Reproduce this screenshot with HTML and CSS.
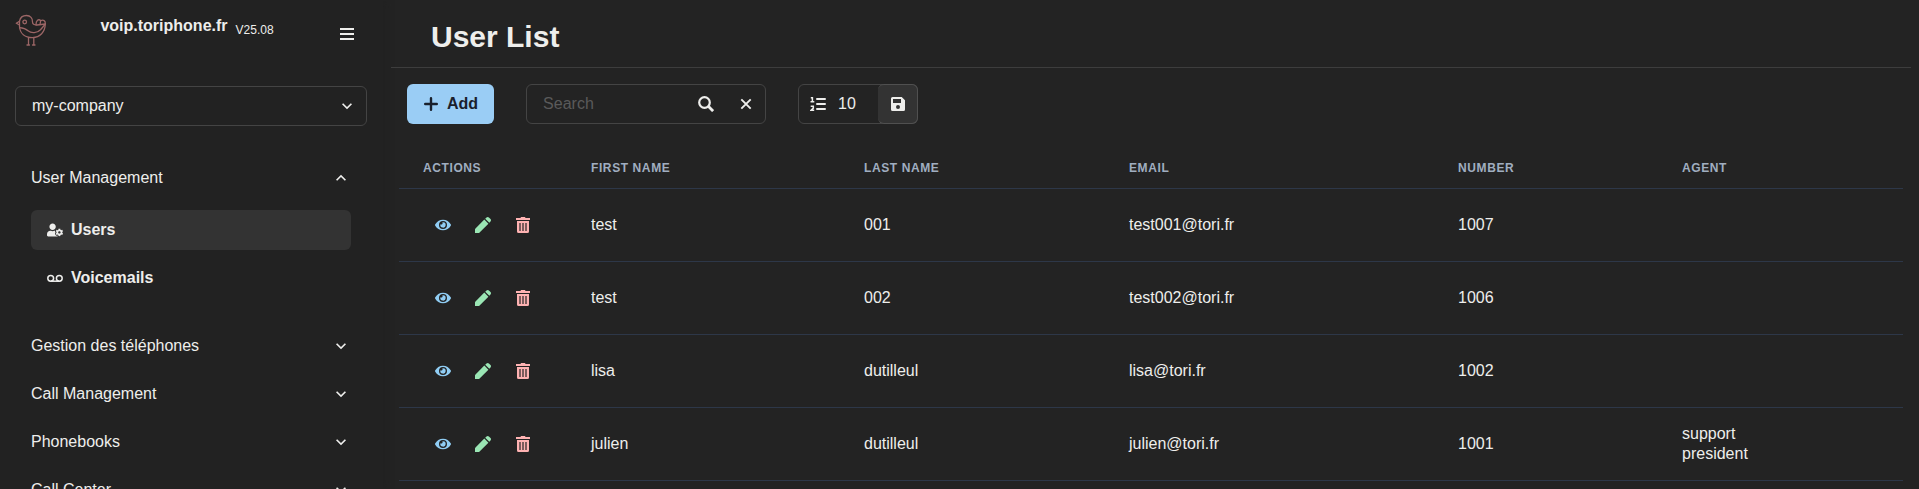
FILE: index.html
```html
<!DOCTYPE html>
<html lang="en">
<head>
<meta charset="utf-8">
<meta name="viewport" content="width=device-width, initial-scale=1">
<title>User List</title>
<link rel="stylesheet" href="styles.css">
</head>
<body>
<svg class="sprite" aria-hidden="true">
  <symbol id="chevron" viewBox="0 0 24 24"><path fill="currentColor" d="M16.590 8.590 12 13.170 7.410 8.590 6 10l6 6 6-6z"/></symbol>
  <symbol id="eye" viewBox="0 0 576 512"><path fill="currentColor" d="M572.52 241.4C518.29 135.59 410.93 64 288 64S57.68 135.64 3.48 241.41a32.35 32.35 0 0 0 0 29.19C57.71 376.41 165.07 448 288 448s230.32-71.64 284.52-177.41a32.35 32.35 0 0 0 0-29.19zM288 400a144 144 0 1 1 144-144 143.93 143.93 0 0 1-144 144zm0-240a95.31 95.31 0 0 0-25.31 3.79 47.85 47.85 0 0 1-66.9 66.9A95.78 95.78 0 1 0 288 160z"/></symbol>
  <symbol id="pencil" viewBox="0 0 16 16"><path fill="currentColor" d="M9.300 2.600 13.400 6.700 4.600 15.500Q4.100 16 3.500 16H0V12.500Q0 11.900.500 11.400zM10.200 1.700 11.500.500Q12.700-.500 13.900.500L15.500 2.100Q16.500 3.300 15.500 4.500L14.300 5.800z"/></symbol>
  <symbol id="trash" viewBox="0 0 16 16"><path fill="currentColor" d="M1 1h4.500L6 0h4l.500 1H15v2H1z"/><path fill="currentColor" fill-rule="evenodd" d="M2 4h12v10.500q0 1.500-1.500 1.500h-9Q2 16 2 14.500zm2 2v8h2V6zm3 0v8h2V6zm3 0v8h2V6z"/><path fill="currentColor" opacity=".4" d="M4 6h2v8H4zM7 6h2v8H7zM10 6h2v8h-2z"/></symbol>
</svg>
<div class="layout">
  <aside class="sidebar">
    <header class="brand">
      <svg class="logo" viewBox="0 0 32 32" fill="none" stroke="currentColor" stroke-width="1.300" stroke-linecap="round" stroke-linejoin="round" aria-hidden="true">
        <path d="M4.500 7.200C5.300 3 8 1.500 11.500 1.500c4 0 6.200 3 6 6.500 0 2 1.500 3.200 4.500 3L30.300 10C30 18 25 23.600 17.500 23.600S5 19.500 4.500 12.500z"/>
        <path d="M4.500 7.200 1.300 9.300 4.500 11M4.500 13.700c4 .300 6 .800 8.500 3 3.500 3 9 2.500 12.500-1 2-2.200 3.500-4 4.800-5.700M21 10.800c0-4.500 2.500-6 4.700-4.300L25 10.500M25.700 6.800c2.500-1.500 5 0 4.600 3.200"/>
        <circle cx="9.700" cy="8" r="1.800"/>
        <path d="M13.500 23.600V30m5.300-6.400V30M12 31h2.500m3 0H20"/>
      </svg>
      <div class="site"><strong class="site-name">voip.toriphone.fr</strong><span class="version">V25.08</span></div>
      <button class="icon-button" type="button" aria-label="Toggle menu">
        <svg class="icon" viewBox="0 0 16 16" aria-hidden="true"><path fill="currentColor" d="M1 2h14v2H1zm0 5h14v2H1zm0 5h14v2H1z"/></svg>
      </button>
    </header>
    <div class="company">
      <select class="company-select" aria-label="Company"><option>my-company</option></select>
      <svg class="chevron company-chevron" aria-hidden="true"><use href="#chevron"/></svg>
    </div>
    <nav class="menu">
      <button class="group" type="button" aria-expanded="true">User Management<svg class="chevron up" aria-hidden="true"><use href="#chevron"/></svg></button>
      <div class="links">
        <a class="link active" href="#users" aria-current="page">
          <svg class="icon" viewBox="0 0 640 512" aria-hidden="true"><path fill="currentColor" d="M610.500 373.300c2.600-14.100 2.600-28.500 0-42.600l25.800-14.900c3-1.700 4.300-5.200 3.300-8.500-6.700-21.600-18.200-41.200-33.200-57.400-2.300-2.500-6-3.100-9-1.400l-25.800 14.900c-10.900-9.300-23.400-16.500-36.900-21.300v-29.800c0-3.400-2.400-6.400-5.700-7.100-22.300-5-45-4.800-66.200 0-3.300.7-5.700 3.700-5.700 7.100v29.800c-13.500 4.800-26 12-36.900 21.300l-25.800-14.900c-2.900-1.700-6.700-1.100-9 1.400-15 16.200-26.500 35.800-33.200 57.400-1 3.300.4 6.800 3.300 8.500l25.800 14.900c-2.600 14.100-2.600 28.500 0 42.600l-25.800 14.900c-3 1.700-4.300 5.200-3.300 8.500 6.700 21.600 18.200 41.100 33.200 57.400 2.300 2.500 6 3.100 9 1.400l25.800-14.900c10.900 9.300 23.400 16.500 36.900 21.300v29.800c0 3.400 2.400 6.400 5.700 7.100 22.300 5 45 4.800 66.200 0 3.300-.7 5.700-3.700 5.700-7.100v-29.800c13.500-4.800 26-12 36.900-21.300l25.800 14.900c2.900 1.700 6.700 1.100 9-1.400 15-16.200 26.500-35.800 33.200-57.400 1-3.300-.4-6.800-3.300-8.500l-25.800-14.900zM496 400.500c-26.800 0-48.500-21.800-48.500-48.500s21.800-48.500 48.500-48.500 48.500 21.800 48.500 48.500-21.700 48.500-48.500 48.500zM224 256c70.700 0 128-57.300 128-128S294.700 0 224 0 96 57.300 96 128s57.300 128 128 128zm201.200 226.500c-2.300-1.200-4.600-2.600-6.800-3.900l-7.900 4.600c-6 3.400-12.800 5.300-19.600 5.300-10.900 0-21.400-4.600-28.900-12.600-18.300-19.800-32.300-43.900-40.200-69.600-5.500-17.700 1.900-36.400 17.900-45.700l7.900-4.600c-.1-2.600-.1-5.200 0-7.800l-7.900-4.600c-16-9.200-23.400-28-17.900-45.700.9-2.900 2.200-5.800 3.200-8.700-3.800-.3-7.500-1.200-11.400-1.200h-16.700c-22.200 10.200-46.900 16-72.900 16s-50.600-5.800-72.900-16h-16.700C60.200 288 0 348.200 0 422.400V464c0 26.500 21.500 48 48 48h352c10.100 0 19.500-3.200 27.200-8.500-1.200-3.800-2-7.700-2-11.800v-9.200z"/></svg>Users</a>
        <a class="link" href="#voicemails">
          <svg class="icon" viewBox="0 0 16 16" fill="none" stroke="currentColor" stroke-width="1.500" aria-hidden="true"><circle cx="3.700" cy="8.300" r="2.900"/><circle cx="12.300" cy="8.300" r="2.900"/><path d="M3.700 11.200h8.600"/></svg>Voicemails</a>
      </div>
      <button class="group" type="button" aria-expanded="false">Gestion des téléphones<svg class="chevron" aria-hidden="true"><use href="#chevron"/></svg></button>
      <button class="group" type="button" aria-expanded="false">Call Management<svg class="chevron" aria-hidden="true"><use href="#chevron"/></svg></button>
      <button class="group" type="button" aria-expanded="false">Phonebooks<svg class="chevron" aria-hidden="true"><use href="#chevron"/></svg></button>
      <button class="group" type="button" aria-expanded="false">Call Center<svg class="chevron" aria-hidden="true"><use href="#chevron"/></svg></button>
    </nav>
  </aside>
  <main class="content">
    <h1 class="title">User List</h1>
    <div class="toolbar">
      <button class="add" type="button"><svg class="icon" viewBox="0 0 16 16" aria-hidden="true"><path fill="none" stroke="currentColor" stroke-width="2.400" stroke-linecap="round" d="M8 2.200v11.600M2.200 8h11.600"/></svg>Add</button>
      <div class="field search">
        <input class="input" type="text" placeholder="Search" aria-label="Search">
        <button class="icon-button" type="button" aria-label="Run search"><svg class="icon" viewBox="0 0 16 16" fill="none" stroke="currentColor" aria-hidden="true"><circle cx="6.500" cy="6.500" r="5.300" stroke-width="2.200"/><path stroke-width="2.800" d="m10.300 10.300 4.800 4.800"/></svg></button>
        <button class="icon-button" type="button" aria-label="Clear search"><svg class="icon" viewBox="0 0 16 16" aria-hidden="true"><path fill="none" stroke="currentColor" stroke-width="1.900" d="m3.300 3.300 9.400 9.400m0-9.400-9.400 9.400"/></svg></button>
      </div>
      <div class="field limit">
        <svg class="icon" viewBox="0 0 16 16" fill="none" stroke="currentColor" aria-hidden="true"><path stroke-width="2" stroke-linecap="round" d="M7 3h8M7 8h8M7 13h8"/><path stroke-width="1.500" d="M.800 1.700h1.600v4.100M.500 5.800h3.800M.700 10.200h2.600v1.900L1 14.300h3.200"/></svg>
        <input class="input" type="text" inputmode="numeric" value="10" aria-label="Rows per page">
        <button class="icon-button save" type="button" aria-label="Save row count"><svg class="icon" viewBox="0 0 16 16" aria-hidden="true"><path fill="currentColor" fill-rule="evenodd" d="M2.500 1h9.200L15 4.300v9.200q0 1.500-1.500 1.500h-11Q1 15 1 13.500v-11Q1 1 2.500 1zM3 3v4h8V3zm5 6a2 2 0 1 0 0 4 2 2 0 0 0 0-4z"/></svg></button>
      </div>
    </div>
    <table class="users">
      <colgroup><col class="col-actions"><col class="col-first"><col class="col-last"><col class="col-email"><col class="col-number"><col class="col-agent"></colgroup>
      <thead><tr><th>Actions</th><th>First name</th><th>Last name</th><th>Email</th><th>Number</th><th>Agent</th></tr></thead>
      <tbody>
        <tr>
          <td><div class="actions"><button class="icon-button view" type="button" aria-label="View"><svg class="icon"><use href="#eye"/></svg></button><button class="icon-button edit" type="button" aria-label="Edit"><svg class="icon"><use href="#pencil"/></svg></button><button class="icon-button delete" type="button" aria-label="Delete"><svg class="icon"><use href="#trash"/></svg></button></div></td>
          <td>test</td><td>001</td><td>test001@tori.fr</td><td>1007</td><td></td>
        </tr>
        <tr>
          <td><div class="actions"><button class="icon-button view" type="button" aria-label="View"><svg class="icon"><use href="#eye"/></svg></button><button class="icon-button edit" type="button" aria-label="Edit"><svg class="icon"><use href="#pencil"/></svg></button><button class="icon-button delete" type="button" aria-label="Delete"><svg class="icon"><use href="#trash"/></svg></button></div></td>
          <td>test</td><td>002</td><td>test002@tori.fr</td><td>1006</td><td></td>
        </tr>
        <tr>
          <td><div class="actions"><button class="icon-button view" type="button" aria-label="View"><svg class="icon"><use href="#eye"/></svg></button><button class="icon-button edit" type="button" aria-label="Edit"><svg class="icon"><use href="#pencil"/></svg></button><button class="icon-button delete" type="button" aria-label="Delete"><svg class="icon"><use href="#trash"/></svg></button></div></td>
          <td>lisa</td><td>dutilleul</td><td>lisa@tori.fr</td><td>1002</td><td></td>
        </tr>
        <tr>
          <td><div class="actions"><button class="icon-button view" type="button" aria-label="View"><svg class="icon"><use href="#eye"/></svg></button><button class="icon-button edit" type="button" aria-label="Edit"><svg class="icon"><use href="#pencil"/></svg></button><button class="icon-button delete" type="button" aria-label="Delete"><svg class="icon"><use href="#trash"/></svg></button></div></td>
          <td>julien</td><td>dutilleul</td><td>julien@tori.fr</td><td>1001</td><td>support<br>president</td>
        </tr>
      </tbody>
    </table>
  </main>
</div>
</body>
</html>
```
FILE: styles.css
```css
* { box-sizing: border-box; }

body {
  margin: 0;
  background: #232323;
  color: #eeeeec;
  font: 16px/24px "Liberation Sans", Arial, sans-serif;
}

button, input, select { font: inherit; color: inherit; }

button {
  border: 0;
  padding: 0;
  background: none;
  cursor: pointer;
}

.sprite { position: absolute; width: 0; height: 0; }
.icon { display: block; flex: none; width: 16px; height: 16px; }
.chevron { flex: none; width: 20px; height: 20px; }
.up { transform: rotate(180deg); }

.icon-button {
  display: flex;
  flex: none;
  align-items: center;
  justify-content: center;
  width: 40px;
  height: 40px;
  border-radius: 6px;
}

.layout { display: flex; height: 100vh; overflow: hidden; }

/* Sidebar */
.sidebar {
  flex: none;
  width: 383px;
  padding: 14px 16px 0 15px;
  background: #222222;
  box-shadow: 0 0 8px #202020;
  overflow: hidden;
}

.brand { display: flex; align-items: flex-start; height: 72px; }
.logo { flex: none; width: 32px; height: 32px; color: #9c6666; }
.brand .icon-button { margin-left: auto; }

.site {
  display: flex;
  flex: 1;
  align-items: flex-start;
  justify-content: center;
  gap: 8px;
}
.site-name { line-height: 24px; }
.version { font-size: 12px; line-height: 32px; }

.company { display: grid; align-items: center; }
.company > * { grid-area: 1 / 1; }
.company-select {
  appearance: none;
  width: 100%;
  height: 40px;
  padding: 0 16px;
  border: 1px solid #444444;
  border-radius: 6px;
  background: #222222;
}
.company-chevron { justify-self: end; margin-right: 10px; pointer-events: none; }

.menu { padding: 28px 16px 0; }
.group {
  display: flex;
  align-items: center;
  justify-content: space-between;
  width: 100%;
  height: 48px;
  text-align: left;
}
.links { display: grid; gap: 8px; padding: 8px 0 24px; }
.link {
  display: flex;
  align-items: center;
  gap: 8px;
  height: 40px;
  padding: 0 16px;
  border-radius: 6px;
  color: inherit;
  font-weight: 700;
  text-decoration: none;
}
.active { background: #333333; }

/* Content */
.content { flex: 1; min-width: 0; padding: 0 8px; }
.title {
  margin: 0;
  padding: 19px 40px 12px;
  border-bottom: 1px solid #3d3d3d;
  font-size: 30px;
  line-height: 36px;
}

.toolbar { display: flex; gap: 32px; padding: 16px 16px 24px; }
.add {
  display: flex;
  align-items: center;
  gap: 8px;
  height: 40px;
  padding: 0 16px;
  border-radius: 6px;
  background: #9acdf5;
  color: #1a202c;
  font-weight: 700;
}

.field {
  display: flex;
  align-items: center;
  height: 40px;
  border: 1px solid #444444;
  border-radius: 6px;
}
.field .icon-button:last-child { margin-right: -1px; }
.input {
  flex: 1;
  min-width: 0;
  height: 100%;
  padding: 0;
  border: 0;
  background: none;
  outline: 0;
}
.input::placeholder { color: #5a5a5a; opacity: 1; }
.search { width: 240px; padding-left: 16px; }
.limit { width: 120px; gap: 12px; padding-left: 11px; }
.limit .input { margin-right: -12px; }
.save { border: 1px solid #505050; border-left: 0; background: #333333; }

.users {
  width: calc(100% - 16px);
  margin: 0 8px;
  border-collapse: separate;
  border-spacing: 0;
  table-layout: fixed;
}
.col-actions { width: 168px; }
.col-first { width: 273px; }
.col-last { width: 265px; }
.col-email { width: 329px; }
.col-number { width: 224px; }
.col-agent { width: 245px; }

th, td {
  padding: 0 24px;
  border-bottom: 1px solid #2d3748;
  text-align: left;
}
th {
  height: 41px;
  color: #a0aec0;
  font-size: 12px;
  line-height: 16px;
  letter-spacing: 0.05em;
  text-transform: uppercase;
}
td { height: 73px; line-height: 20px; }

.actions { display: flex; }
.view { color: #90cdf4; }
.edit { color: #9ae6b4; }
.delete { color: #feb2b2; }
```
